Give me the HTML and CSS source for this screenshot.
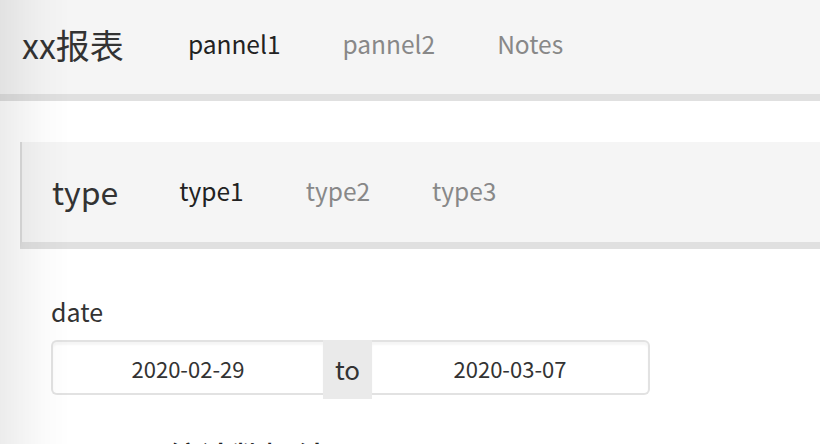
FILE: index.html
```html
<!DOCTYPE html>
<html lang="zh">
<head>
<meta charset="utf-8">
<title>xx报表</title>
<link rel="stylesheet" href="styles.css">
</head>
<body>
<div class="edge-shade"></div>
<nav class="navbar">
  <span class="brand">xx报表</span>
  <ul class="nav">
    <li class="active">pannel1</li>
    <li>pannel2</li>
    <li>Notes</li>
  </ul>
</nav>
<main class="page">
  <nav class="navbar sub">
    <span class="brand">type</span>
    <ul class="nav">
      <li class="active">type1</li>
      <li>type2</li>
      <li>type3</li>
    </ul>
  </nav>
  <section class="form">
    <label class="label">date</label>
    <div class="input-group">
      <div class="field left">2020-02-29</div>
      <div class="addon">to</div>
      <div class="field right">2020-03-07</div>
    </div>
    <h3 class="heading">type xx统计数据结果</h3>
  </section>
</main>
</body>
</html>
```
FILE: styles.css
```css
* { box-sizing: border-box; }
html, body {
  margin: 0;
  padding: 0;
  background: #fff;
  overflow: hidden;
  height: 444px;
}
body {
  font-family: "Noto Sans CJK SC", "Noto Sans", sans-serif;
  color: #333;
}
.edge-shade {
  position: fixed;
  left: 0;
  top: 0;
  bottom: 0;
  width: 70px;
  background: linear-gradient(to right, rgba(0,0,0,0.075), rgba(0,0,0,0.02) 60%, rgba(0,0,0,0));
  pointer-events: none;
  z-index: 10;
}
.navbar {
  display: flex;
  align-items: center;
  height: 101px;
  background: #f5f5f5;
  border-bottom: 7px solid #e0e0e0;
  padding-left: 22px;
  padding-bottom: 5px;
}
.brand {
  font-size: 34px;
  color: #333;
  line-height: 1;
}
.nav {
  display: flex;
  list-style: none;
  margin: 0 0 0 64px;
  padding: 0;
  gap: 62px;
}
.nav li {
  font-size: 24.5px;
  color: #888;
  line-height: 1;
}
.nav li.active {
  color: #222;
}
.page {
  padding-top: 41px;
}
.navbar.sub {
  margin-left: 20px;
  height: 107px;
  border-left: 2px solid #dcdcdc;
  padding-left: 30px;
  padding-bottom: 2px;
}
.navbar.sub .brand {
  font-size: 32px;
}
.navbar.sub .nav {
  margin-left: 61px;
  gap: 62px;
}
.form {
  padding-left: 51px;
  padding-top: 47px;
}
.label {
  display: block;
  font-size: 25px;
  line-height: 30px;
  color: #333;
  margin-bottom: 14px;
}
.input-group {
  display: flex;
  align-items: flex-start;
  width: 599px;
}
.field {
  height: 55px;
  background: #fff;
  border: 2px solid #e2e2e2;
  box-shadow: inset 0 3px 2px rgba(0,0,0,0.04);
  font-size: 22px;
  color: #333;
  display: flex;
  align-items: center;
  justify-content: center;
}
.field.left {
  width: 272px;
  border-radius: 6px 0 0 6px;
  border-right: 0;
}
.field.right {
  width: 278px;
  border-radius: 0 6px 6px 0;
  border-left: 0;
}
.addon {
  width: 49px;
  height: 59px;
  background: #eaeaea;
  font-size: 26px;
  color: #333;
  display: flex;
  align-items: center;
  justify-content: center;
  padding-bottom: 2px;
}
.heading {
  margin: 37px 0 0 7px;
  font-size: 32px;
  font-weight: 500;
  line-height: 40px;
  color: #222;
}
```
